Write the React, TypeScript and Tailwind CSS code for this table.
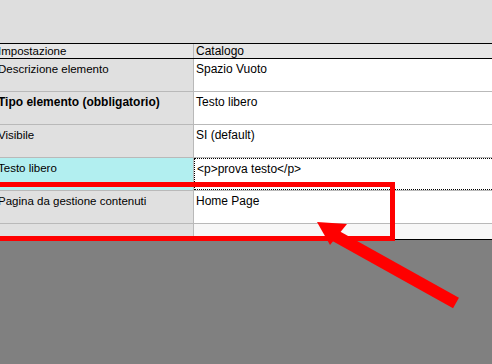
const rows = [
  { label: "Descrizione elemento", value: "Spazio Vuoto" },
  { label: "Tipo elemento (obbligatorio)", value: "Testo libero", bold: true },
  { label: "Visibile", value: "SI (default)" },
  { label: "Testo libero", value: "<p>prova testo</p>", active: true },
  { label: "Pagina da gestione contenuti", value: "Home Page" },
];

function PropertyRow({
  label,
  value,
  bold,
  active,
}: {
  label: string;
  value: string;
  bold?: boolean;
  active?: boolean;
}) {
  return (
    <div className="flex h-[33px] border-b border-[#b9b9b9]">
      <div
        className={`w-[194px] shrink-0 border-r border-[#b9b9b9] pt-[3px] -indent-[2px] ${
          active ? "bg-[#b2eff0]" : "bg-[#e0e0e0]"
        } ${bold ? "text-[12px] font-bold" : ""}`}
      >
        {label}
      </div>
      <div
        className={`flex-1 bg-white pl-[2px] pt-[3px] text-[12px] ${
          active ? "border-y border-l border-dotted border-black" : ""
        }`}
      >
        {value}
      </div>
    </div>
  );
}

export default function App() {
  return (
    <div className="relative h-[364px] w-[492px] overflow-hidden bg-[#808080] font-['Liberation_Sans',Arial,sans-serif] text-[11.5px] leading-[14px] text-black">
      <div className="h-[43px] bg-[#dedede]" />
      <div className="flex h-[16px] border-y border-black bg-[#e6e6e6]">
        <div className="w-[194px] shrink-0 border-r border-[#b9b9b9] -indent-[2px]">Impostazione</div>
        <div className="flex-1 pl-[2px] text-[12px]">Catalogo</div>
      </div>
      {rows.map((r) => (
        <PropertyRow key={r.label} {...r} />
      ))}
      <div className="flex h-[16px] border-b border-black">
        <div className="w-[194px] shrink-0 border-r border-[#b9b9b9] bg-[#e0e0e0]" />
        <div className="flex-1 bg-[#f7f7f7]" />
      </div>

      {/* highlight box */}
      <div className="absolute left-[-10px] top-[182px] h-[59px] w-[405px] border-[5px] border-[#ff0000]" />

      {/* arrow */}
      <svg className="absolute left-0 top-0" width="492" height="364" viewBox="0 0 492 364">
        <line x1="334" y1="235" x2="456" y2="303" stroke="#ff0000" strokeWidth="12" />
        <polygon points="317,222 347,224 330,245" fill="#ff0000" />
      </svg>
    </div>
  );
}
